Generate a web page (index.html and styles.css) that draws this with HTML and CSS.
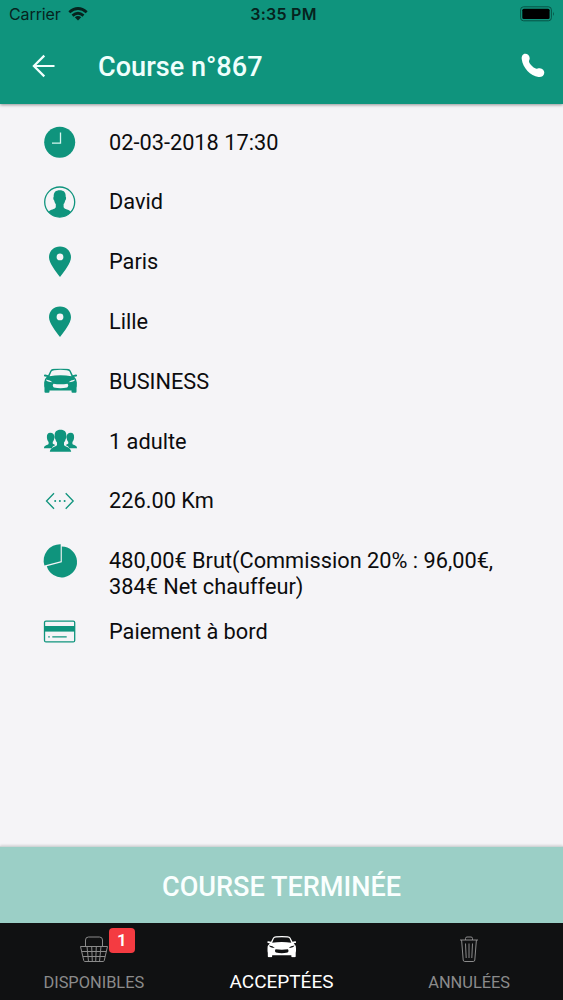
FILE: index.html
```html
<!DOCTYPE html>
<html lang="fr">
<head>
<meta charset="utf-8">
<title>Course n°867</title>
<link rel="stylesheet" href="styles.css">
</head>
<body>
<svg width="0" height="0" class="defs">
  <symbol id="pin" viewBox="0 0 60 60"><path fill-rule="evenodd" d="M30 14.500c-6.400 0-11 4.700-11 10.800 0 6 6.500 13.600 11 19.800 4.500-6.200 11-13.800 11-19.800 0-6.100-4.600-10.800-11-10.800zm0 7a3.400 3.400 0 1 1 0 6.800 3.400 3.400 0 0 1 0-6.800z"/></symbol>
  <symbol id="car" viewBox="0 0 100 74"><path fill-rule="evenodd" d="M0 21q0-3 4-3l9 2 7-14Q22 2 30 1Q50-1 70 1Q78 2 80 6l7 14 9-2q4 0 4 3l-2 3-7 1q8 7 8 17v9q0 4-1 7v12q0 3-3 3H86q-3 0-3-3v-4H17v4q0 3-3 3H5q-3 0-3-3V58q-1-3-1-7v-9q0-10 8-17l-7-1zM17 23q33-5 66 0L77 9Q75 5.500 69 5Q50 3 31 5Q25 5.500 23 9zM6 33q3 8 20 8-6-6-20-8zM94 33q-3 8-20 8 6-6 20-8zM29 46q-5 6 1 11 20 4 40 0 6-5 1-11-21 3-42 0z"/></symbol>
</svg>
<div class="screen">
  <header class="header">
    <div class="status">
      <div class="carrier"><span>Carrier</span>
        <svg class="wifi" viewBox="0 0 20 14"><g fill="none" stroke="#06231e" stroke-width="2.800"><path d="M1.300 5.200Q10-2.200 18.700 5.200"/><path d="M4.500 8.600Q10 4 15.500 8.600"/></g><path fill="#06231e" d="M6.800 10.300Q10 7.900 13.200 10.300L10 13.600z"/></svg>
      </div>
      <div class="clock">3:35 PM</div>
      <svg class="battery" viewBox="0 0 35 16"><rect x=".6" y=".8" width="30.800" height="14" rx="3" fill="none" stroke="#075346" stroke-width="1"/><rect x="2.300" y="2.700" width="27.300" height="10.200" rx="1.500"/><path d="M33 5.500q1.800 2.300 0 4.600z" fill="#075346"/></svg>
    </div>
    <div class="toolbar">
      <svg class="back" viewBox="0 0 24 24"><path d="M22.500 12H2M12.300 1.600L1.900 12l10.400 10.400" fill="none" stroke="#f2fffd" stroke-width="2.200"/></svg>
      <h1 class="title">Course n°867</h1>
      <svg class="phone" viewBox="0 0 24 25"><path fill="#fff" d="M.8 6.500C.3 3 2 .7 4.200.8c2.500 0 4.500 2 4.500 4.500 0 1.500-.8 2.300-.7 3.300.3 2.200 4.200 6.400 6.700 7 1.300.3 2.300-.5 4.100-.4 2.800.2 4.600 2.300 4.500 4.500-.1 3-2.700 4.700-5.800 4.300C9.500 23 1.700 14.500.8 6.500z"/></svg>
    </div>
  </header>
  <main class="details">
    <div class="row"><svg class="icon" viewBox="0 0 60 60"><circle cx="29.700" cy="30.300" r="15.500"/><path class="cut" d="M30.500 20.500v10.700H22"/></svg><p class="text">02-03-2018 17:30</p></div>
    <div class="row"><svg class="icon" viewBox="0 0 60 60"><circle cx="29.700" cy="30" r="15" class="line"/><path d="M29.700 18.300c4 0 6.200 2 6 6.500.7.700.5 3-.5 3.700-.3 1.600-.8 2.700-1.600 3.600v3.200c1.300 2.500 5 1.900 7.400 4.600a15 15 0 0 1-22.600 0c2.400-2.700 6.100-2.100 7.400-4.600v-3.200c-.8-.9-1.300-2-1.600-3.600-1-.7-1.200-3-.5-3.700-.2-4.500 2-6.500 6-6.500z"/></svg><p class="text">David</p></div>
    <div class="row"><svg class="icon"><use href="#pin"/></svg><p class="text">Paris</p></div>
    <div class="row"><svg class="icon"><use href="#pin"/></svg><p class="text">Lille</p></div>
    <div class="row"><svg class="icon" viewBox="0 0 60 60"><use href="#car" x="13.800" y="17.500" width="33.400" height="24.700"/></svg><p class="text">BUSINESS</p></div>
    <div class="row"><svg class="icon" viewBox="0 0 60 60"><path id="side" d="M20.200 21.700c2.800 0 4.300 1.600 4.200 4.600-.1 2.200-.7 3.600-1.700 4.600v1.600c.6.800 1.800 1 2.700 1.500-1.800 1-3 1.400-3.500 3.200h-8c.2-2.500 2.300-2.700 4.200-3.600.4-.3.500-.6.500-1.100v-1.600c-1-1-1.600-2.400-1.700-4.600-.1-3 1-4.600 3.300-4.600z"/><use href="#side" transform="matrix(-1 0 0 1 61 0)"/><path d="M30.500 18.800c4.200 0 6 2.200 5.800 5.800.5.600.3 2.900-.6 3.500-.3 1.500-.9 2.600-1.700 3.400v2.400c1.200 2.400 6.600 1.600 7.200 6.900H19.800c.6-5.300 6-4.500 7.200-6.900v-2.400c-.8-.8-1.400-1.900-1.700-3.400-.9-.6-1.100-2.900-.6-3.500-.2-3.600 1.600-5.800 5.800-5.800z"/></svg><p class="text">1 adulte</p></div>
    <div class="row"><svg class="icon" viewBox="0 0 60 60"><path class="line" d="M24 22.200L16.500 30l7.500 7.800M35.700 22.200L43.200 30l-7.500 7.800"/><circle cx="25.200" cy="30" r="1"/><circle cx="29.900" cy="30" r="1"/><circle cx="34.600" cy="30" r="1"/></svg><p class="text">226.00 Km</p></div>
    <div class="row"><svg class="icon" viewBox="0 0 60 60"><path d="M31.800 15.600A15.400 15.400 0 1 1 16.800 35.200L31.800 31.200z"/><path d="M30.700 13.200V30.300L14.400 34.600A16.500 16.500 0 0 1 30.700 13.200z"/></svg><p class="text">480,00€ Brut(Commission 20% : 96,00€,<br>384€ Net chauffeur)</p></div>
    <div class="row"><svg class="icon" viewBox="0 0 60 60"><rect class="line" x="14.500" y="19.100" width="30.200" height="20.800" rx="1.500"/><path d="M14.500 24h30.200v5.600H14.500z"/><path class="line" d="M18.200 34.900h1.600M22.300 34.900h14.400"/></svg><p class="text">Paiement à bord</p></div>
  </main>
  <button class="finish">COURSE TERMINÉE</button>
  <nav class="tabs">
    <div class="tab"><div class="tabicon">
      <svg width="28" height="26" viewBox="0 0 28 26" fill="none" stroke="#8b8b8b" stroke-width="1"><path d="M5.500 10.500V4q0-3 3-3h11q3 0 3 3v6.500M.5 10.500h27l-3.300 14.200q-.2.800-1 .8H4.800q-.8 0-1-.8zM1.700 15.500h24.600M2.900 20.500h22.200M7 10.500l1.500 15M11.700 10.500l.6 15M16.300 10.500l-.6 15M21 10.500l-1.500 15"/></svg>
      <span class="badge">1</span></div><span>DISPONIBLES</span></div>
    <div class="tab active"><div class="tabicon"><svg width="29.500" height="21.500" fill="#fff"><use href="#car"/></svg></div><span>ACCEPTÉES</span></div>
    <div class="tab"><div class="tabicon"><svg width="18" height="26" viewBox="0 0 18 26" fill="none" stroke="#8b8b8b" stroke-width="1"><path d="M0 4h18M5.500 4V2.500q0-1.500 1.500-1.500h4q1.500 0 1.500 1.500V4M1.600 4l1.600 20q.1 1.500 1.600 1.500h8.400q1.500 0 1.600-1.500L16.400 4M5.500 7.500l.7 14.500M9 7.500V22M12.500 7.500L11.800 22"/></svg></div><span>ANNULÉES</span></div>
  </nav>
</div>
</body>
</html>
```
FILE: styles.css
```css
* { box-sizing: border-box; }
body { margin: 0; font-family: Roboto, sans-serif; }
.defs { display: none; }
.screen { width: 563px; height: 1000px; display: flex; flex-direction: column; background: #f5f4f7; overflow: hidden; }
.header { height: 104px; flex: none; background: #0f947d; box-shadow: 0 1px 3px rgba(0, 0, 0, .4); }
.status { height: 28px; padding: 0 8px 0 9px; display: grid; grid-template-columns: 1fr auto 1fr; align-items: center; font-family: Inter, sans-serif; font-size: 16px; color: #06231e; }
.carrier { display: flex; align-items: center; gap: 7px; letter-spacing: -.1px; }
.wifi { width: 20px; height: 14px; margin-top: -1px; }
.clock { font-weight: 600; padding: 0 0 0 3px; letter-spacing: .25px; }
.battery { width: 35px; height: 16px; justify-self: end; }
.toolbar { height: 76px; padding: 0 18px 0 32px; display: flex; align-items: center; }
.back { width: 24px; height: 24px; }
.title { margin: 0 auto 0 42px; padding-top: 1px; font-size: 27.100px; font-weight: 500; line-height: 30px; color: #effffc; }
.phone { width: 24px; height: 25px; margin-top: -1px; }
.details { flex: 1; padding: 8.300px 30px 0; }
.row { display: flex; align-items: flex-start; min-height: 59.800px; }
.icon { width: 60px; height: 60px; flex: none; margin: 0 19px -1px 0; fill: #0f947d; }
.line { fill: none; stroke: #0f947d; stroke-width: 1.300; }
.cut { fill: none; stroke: #d5f5ef; stroke-width: 1.300; }
.text { margin: 0; padding: 17.300px 0 1.600px; font-size: 21.750px; line-height: 26px; color: #0c0c0e; white-space: nowrap; }
.finish { height: 77px; flex: none; border: 0; border-top: 1px solid #d0d5d6; padding: 4px 0 0; background: #9bcfc6; color: #fafffe; font: 500 27.100px/30px Roboto, sans-serif; box-shadow: 0 -1px 2px rgba(0, 0, 0, .12); }
.tabs { height: 77px; flex: none; display: grid; grid-template-columns: repeat(3, 1fr); background: #101112; color: #8b8b8b; }
.tab { display: flex; flex-direction: column; align-items: center; font-size: 16.400px; line-height: 24px; padding-top: 13px; }
.tabicon { position: relative; height: 35px; }
.tabicon svg { display: block; }
.active { color: #fff; font-size: 19px; line-height: 22px; }
.badge { position: absolute; left: 29px; top: -8px; width: 26px; height: 25px; border-radius: 4px; background: #f43b41; color: #fff; font-size: 17px; line-height: 25px; font-weight: 600; text-align: center; }
```
